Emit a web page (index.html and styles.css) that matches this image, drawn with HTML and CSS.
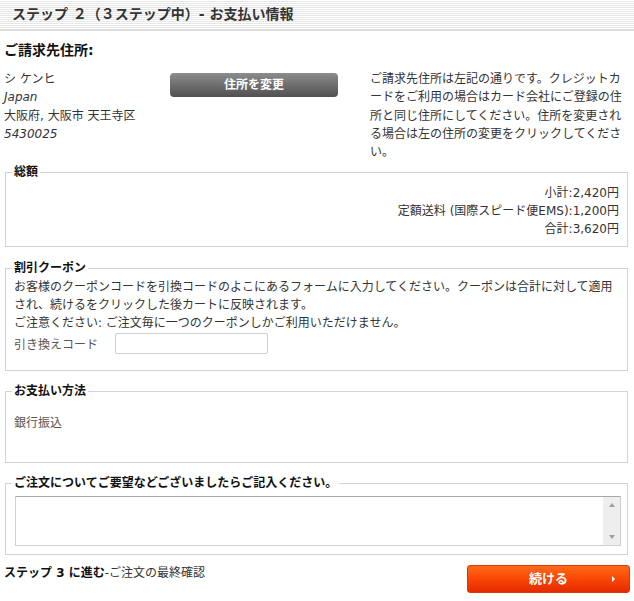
FILE: index.html
```html
<!DOCTYPE html>
<html lang="ja">
<head>
<meta charset="utf-8">
<title>お支払い情報</title>
<link rel="stylesheet" href="styles.css">
</head>
<body>
<div class="page">
  <div class="step-head">
    <h2 class="step-title">ステップ ２（３ステップ中）- お支払い情報</h2>
  </div>
  <div class="content">
    <h3 class="section-title">ご請求先住所:</h3>
    <div class="billing">
      <address class="addr">シ ケンヒ<br><em>Japan</em><br>大阪府, 大阪市 天王寺区<br><em>5430025</em></address>
      <div class="addr-btn-col"><a class="btn-gray" href="#">住所を変更</a></div>
      <p class="addr-note">ご請求先住所は左記の通りです。クレジットカードをご利用の場合はカード会社にご登録の住所と同じ住所にしてください。住所を変更される場合は左の住所の変更をクリックしてください。</p>
    </div>

    <fieldset class="box box-total">
      <legend>総額</legend>
      <div class="totals">
        <div>小計:2,420円</div>
        <div>定額送料 (国際スピード便EMS):1,200円</div>
        <div>合計:3,620円</div>
      </div>
    </fieldset>

    <fieldset class="box box-coupon">
      <legend>割引クーポン</legend>
      <p class="coupon-text">お客様のクーポンコードを引換コードのよこにあるフォームに入力してください。クーポンは合計に対して適用され、続けるをクリックした後カートに反映されます。</p>
      <p class="coupon-text">ご注意ください: ご注文毎に一つのクーポンしかご利用いただけません。</p>
      <div class="coupon-row">
        <label class="coupon-label" for="dc">引き換えコード</label>
        <input class="coupon-input" id="dc" type="text">
      </div>
    </fieldset>

    <fieldset class="box box-pay">
      <legend>お支払い方法</legend>
      <div class="pay-name">銀行振込</div>
    </fieldset>

    <fieldset class="box box-comment">
      <legend>ご注文についてご要望などございましたらご記入ください。</legend>
      <div class="ta-wrap">
        <textarea class="comment-ta"></textarea>
        <div class="fake-scroll"><span class="arr-up"></span><span class="arr-down"></span></div>
      </div>
    </fieldset>

    <div class="footer-row">
      <div class="next-text"><strong>ステップ 3 に進む</strong>-ご注文の最終確認</div>
      <a class="btn-go" href="#"><span></span><span class="go-label">続ける</span><span class="go-arrow"></span></a>
    </div>
  </div>
</div>
</body>
</html>
```

FILE: styles.css
```css
body {
  margin: 0;
  background: #fff;
  color: #333;
  font-family: "DejaVu Sans", "Noto Sans CJK JP", sans-serif;
  font-size: 12px;
}

.step-head {
  height: 29px;
  border-bottom: 2px solid #dcdcdc;
  background: repeating-linear-gradient(to bottom, #ffffff 0, #ffffff 1px, #e6e6e6 1px, #e6e6e6 2px);
}

.step-title {
  margin: 0;
  padding-left: 12px;
  font-size: 14px;
  line-height: 29px;
  font-weight: bold;
  color: #333;
}

.content {
  padding: 0 6px 0 4px;
}

.section-title {
  margin: 9px 0 10px;
  font-size: 14px;
  line-height: 20px;
  font-weight: bold;
  color: #111;
}

.billing {
  display: flex;
  align-items: flex-start;
}

.addr {
  width: 166px;
  font-style: normal;
  line-height: 18.3px;
  color: #333;
}

.addr em {
  font-style: italic;
}

.addr-btn-col {
  width: 168px;
  padding-top: 3px;
}

.btn-gray {
  display: block;
  height: 24px;
  line-height: 24px;
  border-radius: 4px;
  background: linear-gradient(to bottom, #8c8c8c 0%, #6e6e6e 50%, #505050 100%);
  color: #fff;
  font-weight: bold;
  font-size: 12px;
  text-align: center;
  text-decoration: none;
}

.addr-note {
  margin: 0 0 0 32px;
  width: 256px;
  line-height: 18.3px;
  line-break: anywhere;
  color: #333;
}

.box {
  margin: 12px 0 0 1px;
  border: 1px solid #d2d3da;
  padding: 0 8px 8px 8px;
  min-width: 0;
}

.box legend {
  padding: 0 2px;
  margin-left: -2px;
  font-weight: bold;
  font-size: 12px;
  line-height: 16px;
  color: #111;
}

.box-total {
  margin-top: 3px;
  padding-top: 4px;
  padding-bottom: 8px;
}

.totals {
  text-align: right;
  line-height: 18px;
}

.box-coupon {
  margin-top: 13px;
  padding-top: 2px;
  padding-bottom: 16px;
}

.coupon-text {
  margin: 0;
  line-height: 18px;
  line-break: anywhere;
}

.coupon-row {
  display: flex;
  align-items: center;
  margin-top: 1px;
}

.coupon-label {
  width: 101px;
  color: #555;
}

.coupon-input {
  width: 153px;
  height: 21px;
  box-sizing: border-box;
  margin: 0;
  border: 1px solid #cfcfcf;
  border-radius: 2px;
  background: #fff;
}

.box-pay {
  padding-top: 15px;
  padding-bottom: 30px;
}

.pay-name {
  line-height: 18px;
  color: #555;
}

.box-comment {
  padding-top: 5px;
  padding-right: 6px;
  padding-bottom: 8px;
}

.ta-wrap {
  position: relative;
  margin-left: 1px;
}

.comment-ta {
  display: block;
  box-sizing: border-box;
  width: 100%;
  height: 50px;
  margin: 0;
  border: 1px solid #d0d0d0;
  border-top-color: #a9a9a9;
  resize: none;
  overflow: hidden;
  background: #fff;
}

.fake-scroll {
  position: absolute;
  top: 1px;
  right: 1px;
  bottom: 1px;
  width: 17px;
  background: #eeeeee;
  display: flex;
  flex-direction: column;
  justify-content: space-between;
  align-items: center;
  padding: 6px 0;
  box-sizing: border-box;
}

.arr-up {
  width: 0;
  height: 0;
  border-left: 3px solid transparent;
  border-right: 3px solid transparent;
  border-bottom: 4px solid #a0a0a0;
}

.arr-down {
  width: 0;
  height: 0;
  border-left: 3px solid transparent;
  border-right: 3px solid transparent;
  border-top: 4px solid #a0a0a0;
}

.footer-row {
  display: flex;
  justify-content: space-between;
  align-items: flex-start;
  margin-top: 10px;
}

.next-text {
  line-height: 16px;
  font-size: 12px;
  color: #333;
}

.next-text strong {
  color: #111;
}

.btn-go {
  display: grid;
  grid-template-columns: 1fr auto 1fr;
  align-items: center;
  width: 163px;
  height: 28px;
  box-sizing: border-box;
  margin-right: -2px;
  border: 1px solid #d93a00;
  border-radius: 3px;
  background: linear-gradient(to bottom, #ff6a1a 0%, #fb4a05 45%, #e42a00 100%);
  color: #fff;
  text-decoration: none;
  font-weight: bold;
  font-size: 13px;
}

.go-label {
  line-height: 26px;
}

.go-arrow {
  justify-self: end;
  margin-right: 14px;
  width: 0;
  height: 0;
  border-top: 3px solid transparent;
  border-bottom: 3px solid transparent;
  border-left: 3px solid #fff;
}
```
